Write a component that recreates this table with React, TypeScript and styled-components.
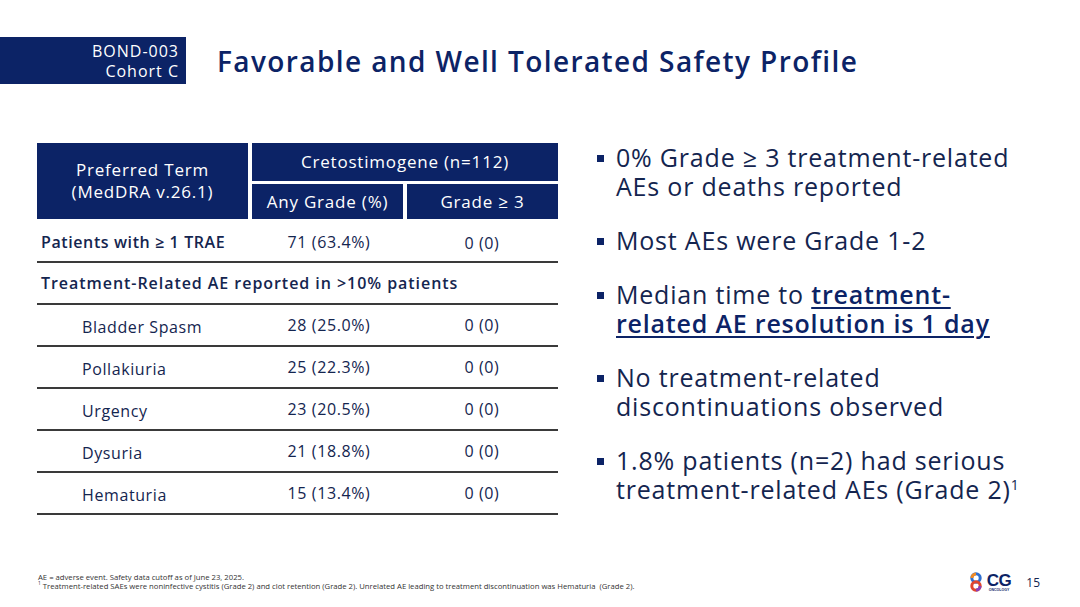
import styled, { createGlobalStyle } from "styled-components";

const GlobalStyle = createGlobalStyle`
    html, body {
        margin: 0;
        padding: 0;
        background: #fff;
    }
    * {
        box-sizing: border-box;
    }
`;

const NAVY = "#0c2366";
const INK = "#14254f";

type Row = {
    term: string;
    any: string;
    grade3: string;
};

const rows: Row[] = [
    {term: "Bladder Spasm", any: "28 (25.0%)", grade3: "0 (0)"},
    {term: "Pollakiuria", any: "25 (22.3%)", grade3: "0 (0)"},
    {term: "Urgency", any: "23 (20.5%)", grade3: "0 (0)"},
    {term: "Dysuria", any: "21 (18.8%)", grade3: "0 (0)"},
    {term: "Hematuria", any: "15 (13.4%)", grade3: "0 (0)"},
];

const Logo = () => (
    <LogoWrap>
        <svg width="20" height="20" viewBox="0 0 20 20">
            <circle cx="10" cy="6" r="4.2" fill="none" stroke="#2f6fd0" strokeWidth="3"/>
            <path d="M6 6 A4 4 0 0 1 10 2" fill="none" stroke="#f08a24" strokeWidth="3"/>
            <circle cx="10" cy="14" r="4.2" fill="none" stroke="#e0452f" strokeWidth="3"/>
            <path d="M14 14 A4 4 0 0 1 10 18" fill="none" stroke="#8a3fb8" strokeWidth="3"/>
        </svg>
        <LogoText>
            <LogoLetters>CG</LogoLetters>
            <LogoSub>ONCOLOGY</LogoSub>
        </LogoText>
    </LogoWrap>
);

export default function App() {
    return (
        <Slide>
            <GlobalStyle/>
            <Header>
                <Tag>
                    <span>BOND-003</span>
                    <span>Cohort C</span>
                </Tag>
                <Title>Favorable and Well Tolerated Safety Profile</Title>
            </Header>

            <Main>
                <Table>
                    <HeadCell $rowSpan>Preferred Term<br/>(MedDRA v.26.1)</HeadCell>
                    <HeadCell $wide>Cretostimogene (n=112)</HeadCell>
                    <HeadCell>Any Grade (%)</HeadCell>
                    <HeadCell>Grade ≥ 3</HeadCell>

                    <BodyRow $first>
                        <TermCell $bold>Patients with ≥ 1 TRAE</TermCell>
                        <ValueCell>71 (63.4%)</ValueCell>
                        <ValueCell $low>0 (0)</ValueCell>
                    </BodyRow>
                    <BodyRow>
                        <SpanCell>Treatment-Related AE reported in &gt;10% patients</SpanCell>
                    </BodyRow>
                    {rows.map((r) => (
                        <BodyRow key={r.term}>
                            <TermCell $indent>{r.term}</TermCell>
                            <ValueCell>{r.any}</ValueCell>
                            <ValueCell>{r.grade3}</ValueCell>
                        </BodyRow>
                    ))}
                </Table>

                <Bullets>
                    <Bullet>0% Grade ≥ 3 treatment-related AEs or deaths reported</Bullet>
                    <Bullet>Most AEs were Grade 1-2</Bullet>
                    <Bullet>
                        Median time to <Strong>treatment-related AE resolution is 1 day</Strong>
                    </Bullet>
                    <Bullet>No treatment-related discontinuations observed</Bullet>
                    <Bullet>
                        1.8% patients (n=2) had serious treatment-related AEs <NoWrap>(Grade 2)<sup>1</sup></NoWrap>
                    </Bullet>
                </Bullets>
            </Main>

            <Footer>
                <Notes>
                    <span>AE = adverse event. Safety data cutoff as of June 23, 2025.</span>
                    <span><sup>1</sup> Treatment-related SAEs were noninfective cystitis (Grade 2) and clot retention (Grade 2). Unrelated AE leading to treatment discontinuation was Hematuria &nbsp;(Grade 2).</span>
                </Notes>
                <Logo/>
                <PageNo>15</PageNo>
            </Footer>
        </Slide>
    );
}

const Slide = styled.div`
    width: 1080px;
    height: 607px;
    background: #fff;
    display: flex;
    flex-direction: column;
    font-family: "Open Sans", "Noto Sans", sans-serif;
    color: ${INK};
    overflow: hidden;
`;
const Header = styled.div`
    display: flex;
    align-items: center;
    gap: 31px;
    margin-top: 37px;
`;
const Tag = styled.div`
    width: 186px;
    height: 47px;
    background: ${NAVY};
    color: #fff;
    display: flex;
    flex-direction: column;
    align-items: flex-end;
    justify-content: center;
    padding-right: 7px;
    font-size: 16px;
    line-height: 20px;
    letter-spacing: 1px;
`;
const Title = styled.h1`
    margin: 0;
    font-size: 28px;
    font-weight: 600;
    color: ${NAVY};
    letter-spacing: 1.4px;
`;
const Main = styled.div`
    display: flex;
    align-items: flex-start;
    margin-top: 59px;
    padding-left: 37px;
`;
const Table = styled.div`
    display: grid;
    grid-template-columns: 211px 151px 151px;
    column-gap: 4px;
    row-gap: 3px;
    width: 521px;
`;
const HeadCell = styled.div<{ $rowSpan?: boolean; $wide?: boolean }>`
    background: ${NAVY};
    color: #fff;
    font-size: 17px;
    line-height: 22px;
    letter-spacing: 0.8px;
    text-align: center;
    display: flex;
    align-items: center;
    justify-content: center;
    height: ${(p) => (p.$rowSpan ? "76px" : p.$wide ? "38px" : "35px")};
    grid-row: ${(p) => (p.$rowSpan ? "span 2" : "auto")};
    grid-column: ${(p) => (p.$wide ? "span 2" : "auto")};
`;
const BodyRow = styled.div<{ $first?: boolean }>`
    grid-column: 1 / -1;
    display: grid;
    grid-template-columns: 215px 154px 152px;
    align-items: center;
    height: ${(p) => (p.$first ? "41px" : "42px")};
    margin-top: ${(p) => (p.$first ? "0" : "-3px")};
    border-bottom: 2px solid #3a3a3a;
    font-size: 16px;
    letter-spacing: 0.6px;
`;
const TermCell = styled.div<{ $bold?: boolean; $indent?: boolean }>`
    padding-left: ${(p) => (p.$indent ? "45px" : "4px")};
    padding-top: ${(p) => (p.$indent ? "3px" : "0")};
    font-weight: ${(p) => (p.$bold ? 600 : 400)};
    white-space: nowrap;
`;
const ValueCell = styled.div<{ $low?: boolean }>`
    text-align: center;
    padding-top: ${(p) => (p.$low ? "3px" : "0")};
`;
const SpanCell = styled.div`
    grid-column: 1 / -1;
    padding-left: 4px;
    font-weight: 600;
    letter-spacing: 0.95px;
`;
const Bullets = styled.ul`
    list-style: none;
    margin: 0 0 0 39px;
    padding: 0;
    width: 435px;
    display: flex;
    flex-direction: column;
    gap: 25px;
`;
const Bullet = styled.li`
    position: relative;
    padding-left: 19px;
    font-size: 25px;
    line-height: 29px;
    letter-spacing: 0.8px;
    color: ${INK};
    &::before {
        content: "";
        position: absolute;
        left: 0;
        top: 12px;
        width: 7px;
        height: 7px;
        background: ${NAVY};
    }
    sup {
        font-size: 14px;
        line-height: 0;
    }
`;
const NoWrap = styled.span`
    white-space: nowrap;
`;
const Strong = styled.span`
    font-weight: 600;
    color: ${NAVY};
    text-decoration: underline;
    text-decoration-thickness: 2px;
    text-underline-offset: 3px;
`;
const Footer = styled.div`
    margin-top: auto;
    margin-bottom: 15px;
    display: flex;
    align-items: center;
    padding-left: 38px;
    padding-right: 40px;
`;
const Notes = styled.div`
    flex: 1;
    display: flex;
    flex-direction: column;
    font-size: 7.7px;
    line-height: 9px;
    color: #333;
    sup {
        font-size: 5px;
        line-height: 0;
    }
`;
const LogoWrap = styled.div`
    display: flex;
    align-items: center;
    gap: 1px;
    margin-right: 15px;
`;
const LogoText = styled.div`
    display: flex;
    flex-direction: column;
    align-items: center;
`;
const LogoLetters = styled.span`
    font-family: "Liberation Sans", Arial, sans-serif;
    font-weight: 700;
    font-size: 17px;
    line-height: 15px;
    color: ${NAVY};
    letter-spacing: -0.5px;
`;
const LogoSub = styled.span`
    font-family: "Liberation Sans", Arial, sans-serif;
    font-size: 3.5px;
    line-height: 4px;
    color: ${NAVY};
    font-weight: 700;
`;
const PageNo = styled.span`
    font-size: 12px;
    color: ${INK};
`;
